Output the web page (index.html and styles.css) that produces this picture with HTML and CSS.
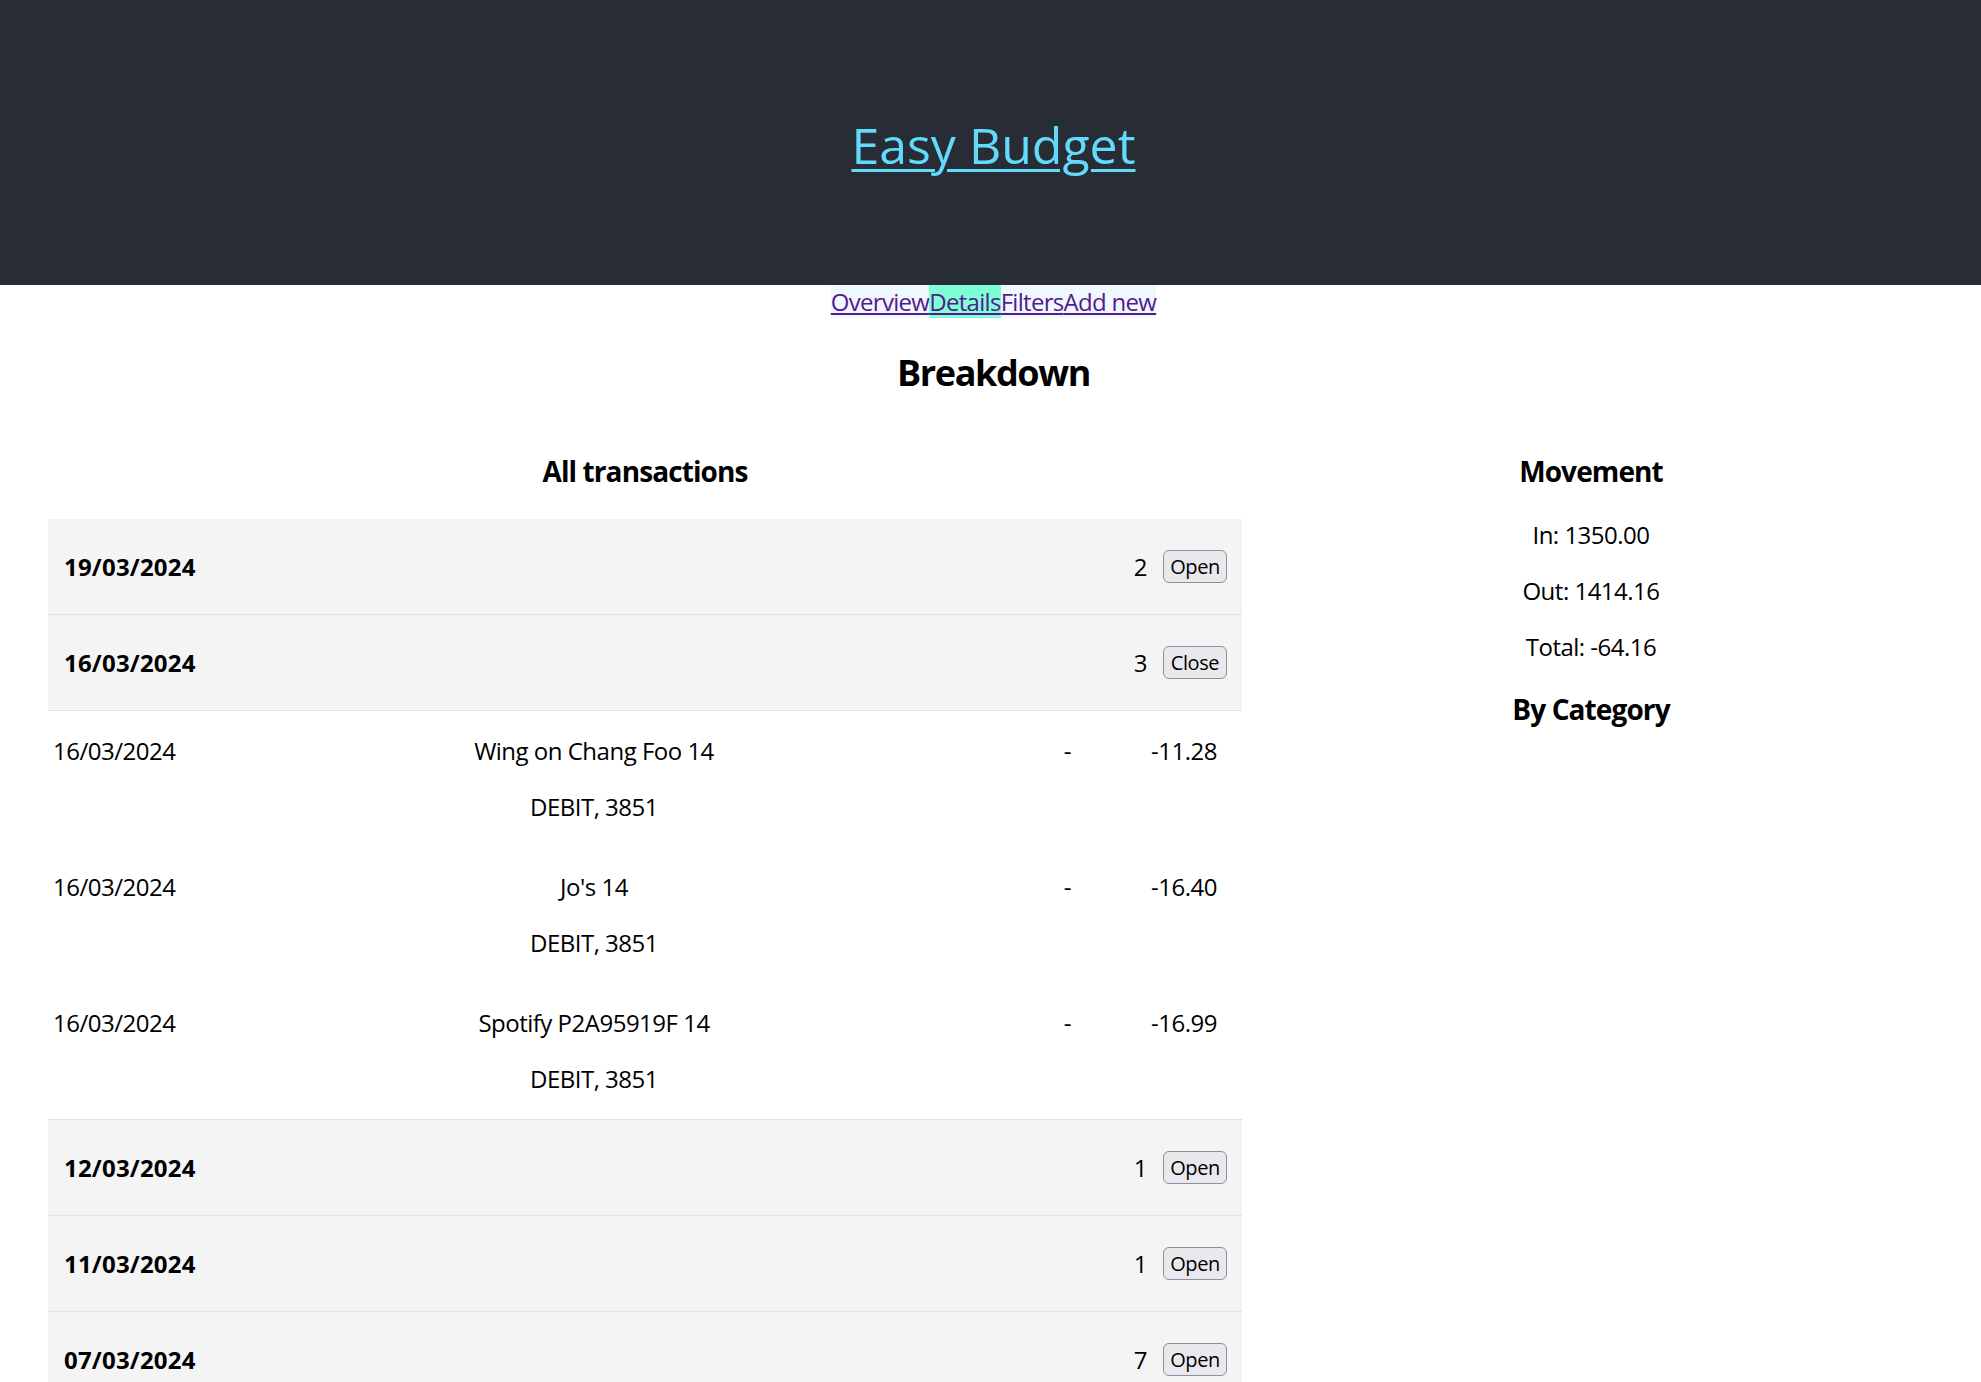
FILE: index.html
```html
<!DOCTYPE html>
<html lang="en">
<head>
<meta charset="utf-8">
<title>Easy Budget</title>
<link rel="stylesheet" href="styles.css">
</head>
<body>
<header class="app-header">
  <a class="app-link" href="#">Easy Budget</a>
</header>
<nav class="nav">
  <div class="nav-inner">
    <a class="nav-link" href="#">Overview</a>
    <a class="nav-link active" href="#">Details</a>
    <a class="nav-link" href="#">Filters</a>
    <a class="nav-link" href="#">Add new</a>
  </div>
</nav>
<h2 class="page-title">Breakdown</h2>
<main class="breakdown">
  <section class="transactions">
    <h3 class="section-title">All transactions</h3>
    <div class="group">
      <span class="group-date">19/03/2024</span>
      <span class="group-count">2</span>
      <button class="toggle">Open</button>
    </div>
    <div class="group">
      <span class="group-date">16/03/2024</span>
      <span class="group-count">3</span>
      <button class="toggle">Close</button>
    </div>
    <div class="details">
      <div class="tx">
        <p class="tx-date">16/03/2024</p>
        <div class="tx-desc"><p>Wing on Chang Foo 14</p><p>DEBIT, 3851</p></div>
        <p class="tx-cat">-</p>
        <p class="tx-amount">-11.28</p>
      </div>
      <div class="tx">
        <p class="tx-date">16/03/2024</p>
        <div class="tx-desc"><p>Jo's 14</p><p>DEBIT, 3851</p></div>
        <p class="tx-cat">-</p>
        <p class="tx-amount">-16.40</p>
      </div>
      <div class="tx">
        <p class="tx-date">16/03/2024</p>
        <div class="tx-desc"><p>Spotify P2A95919F 14</p><p>DEBIT, 3851</p></div>
        <p class="tx-cat">-</p>
        <p class="tx-amount">-16.99</p>
      </div>
    </div>
    <div class="group">
      <span class="group-date">12/03/2024</span>
      <span class="group-count">1</span>
      <button class="toggle">Open</button>
    </div>
    <div class="group">
      <span class="group-date">11/03/2024</span>
      <span class="group-count">1</span>
      <button class="toggle">Open</button>
    </div>
    <div class="group">
      <span class="group-date">07/03/2024</span>
      <span class="group-count">7</span>
      <button class="toggle">Open</button>
    </div>
  </section>
  <aside class="summary">
    <h3 class="section-title">Movement</h3>
    <p class="summary-line">In: 1350.00</p>
    <p class="summary-line">Out: 1414.16</p>
    <p class="summary-line">Total: -64.16</p>
    <h3 class="section-title">By Category</h3>
  </aside>
</main>
</body>
</html>
```

FILE: styles.css
```css
* {
  box-sizing: border-box;
}

body {
  margin: 0;
  font-family: "Open Sans", "Noto Sans", sans-serif;
  font-size: 24px;
  line-height: 32px;
  letter-spacing: -0.5px;
  color: #000;
  background: #fff;
}

.app-header {
  height: 285px;
  background: #282c34;
  display: flex;
  align-items: center;
  justify-content: center;
  padding: 4px 0 0 6px;
}

.app-link {
  color: #61dafb;
  font-size: 50px;
  line-height: 64px;
  letter-spacing: 0;
  text-decoration: underline;
  text-decoration-thickness: 3px;
  text-underline-offset: 5px;
}

.nav {
  display: flex;
  justify-content: center;
  padding-left: 6px;
}

.nav-inner {
  display: flex;
  background: #f0f8ff;
}

.nav-link {
  color: #551a8b;
  font-size: 24px;
  line-height: 33px;
  text-decoration: underline;
  letter-spacing: -0.7px;
}

.nav-link.active {
  background: #7fffd4;
}

.page-title {
  margin: 31px 0 28px;
  padding-left: 6px;
  text-align: center;
  font-size: 36px;
  line-height: 48px;
  font-weight: 700;
  letter-spacing: -1.4px;
}

.breakdown {
  display: grid;
  grid-template-columns: 1194px 1fr;
  padding: 0 41px 0 48px;
}

.section-title {
  margin: 28px 0 29px;
  text-align: center;
  font-size: 28px;
  line-height: 37px;
  font-weight: 700;
  letter-spacing: -0.9px;
}

.group {
  display: flex;
  align-items: center;
  height: 96px;
  padding: 0 15px 0 16px;
  background: #f4f4f4;
  border-bottom: 1px solid #e2e2e2;
}

.group-date {
  flex: 1;
  font-weight: 700;
  letter-spacing: 0.2px;
}

.group-count {
  margin-right: 16px;
}

.toggle {
  width: 64px;
  height: 33px;
  padding: 0;
  font-family: inherit;
  font-size: 20px;
  line-height: 26px;
  color: #000;
  background: #e9e9ed;
  border: 1px solid #8f8f9d;
  border-radius: 6px;
  letter-spacing: -0.4px;
}

.details {
  border-bottom: 1px solid #e2e2e2;
}

.tx {
  display: grid;
  grid-template-columns: 295px 492px 260px 1fr;
  padding-left: 5px;
}

.tx p {
  margin: 24px 0;
}

.tx-desc {
  text-align: center;
}

.tx-desc p + p {
  margin-top: 24px;
}

.tx-cat {
  text-align: right;
  padding-right: 29px;
}

.tx-amount {
  text-align: right;
  padding-right: 25px;
}

.summary {
  text-align: center;
}

.summary-line {
  margin: 24px 0;
}
```
